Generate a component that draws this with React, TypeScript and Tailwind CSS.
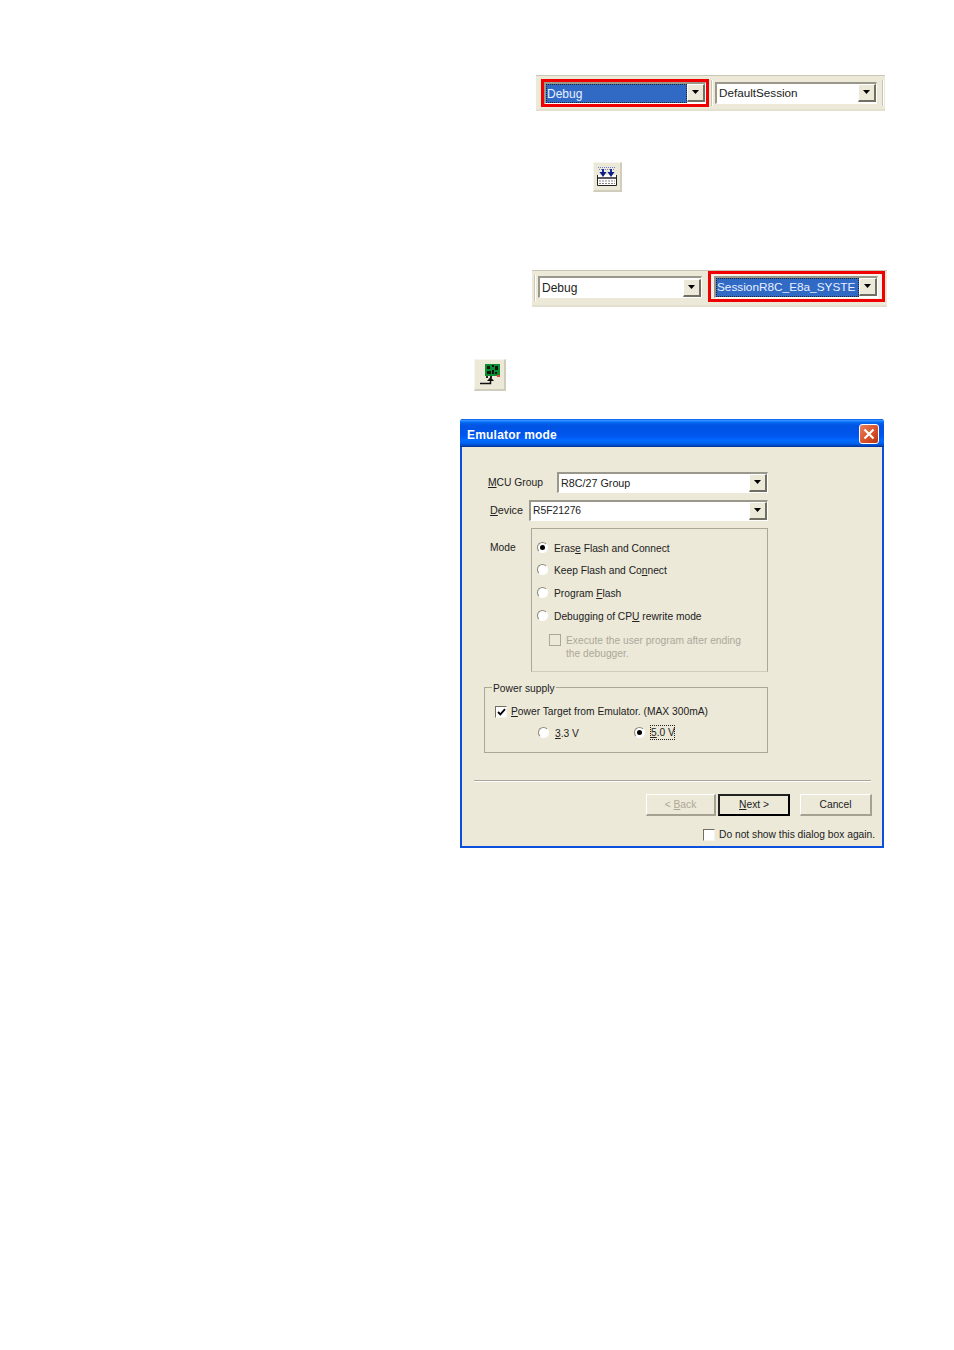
const sans = "font-['Liberation_Sans',Arial,sans-serif]";

function ComboArrow() {
  return (
    <div className="flex h-[18px] w-[18px] shrink-0 items-center justify-center border-r-2 border-b-2 border-l border-t border-r-[#716f64] border-b-[#716f64] border-l-white border-t-white bg-[#ece9d8]">
      <svg width="8" height="5" viewBox="0 0 8 5">
        <path d="M0 0h7L3.5 4z" fill="#000" />
      </svg>
    </div>
  );
}

function Combo({
  text,
  width,
  selected,
  textSize,
  height,
}: {
  text: string;
  width: string;
  selected?: boolean;
  textSize?: string;
  height?: string;
}) {
  return (
    <div
      className={`flex items-center border-t-2 border-l-2 border-r border-b border-t-[#9a988a] border-l-[#9a988a] border-r-white border-b-white bg-white ${height ?? "h-[22px]"} ${width}`}
    >
      <div
        className={`flex h-full min-w-0 flex-1 items-center overflow-hidden whitespace-nowrap ${textSize ?? "text-[12px]"} ${
          selected
            ? "my-[1px] border border-dotted border-[#222] bg-[#316ac5] pt-[1px] text-[#e8f0ff]"
            : "pl-[2px] text-[#222]"
        }`}
      >
        {text}
      </div>
      <ComboArrow />
    </div>
  );
}

function ToolbarButton({ children, size }: { children: React.ReactNode; size: string }) {
  return (
    <div
      className={`flex items-center justify-center border-t border-l border-r-2 border-b-2 border-t-[#f6f5ee] border-l-[#f6f5ee] border-r-[#d0cdbc] border-b-[#d0cdbc] bg-[#ece9d8] ${size}`}
    >
      {children}
    </div>
  );
}

function Radio({ checked }: { checked?: boolean }) {
  return (
    <span className="flex h-[11px] w-[11px] shrink-0 items-center justify-center rounded-full border border-t-[#8a887a] border-l-[#8a887a] border-r-white border-b-white bg-white">
      {checked && <span className="h-[5px] w-[5px] rounded-full bg-black" />}
    </span>
  );
}

function CheckBox({ checked, disabled }: { checked?: boolean; disabled?: boolean }) {
  return (
    <span
      className={`flex h-[12px] w-[12px] shrink-0 items-center justify-center border-t border-l border-r border-b ${
        disabled
          ? "border-[#aaa89a] bg-[#ece9d8]"
          : "border-t-[#716f64] border-l-[#716f64] border-r-[#f5f4ea] border-b-[#f5f4ea] bg-white"
      }`}
    >
      {checked && (
        <svg width="9" height="8" viewBox="0 0 9 8">
          <path d="M1 4l2.4 2.4L8 1.2" fill="none" stroke="#000" strokeWidth="1.8" />
        </svg>
      )}
    </span>
  );
}

function RadioRow({
  checked,
  label,
  className,
}: {
  checked?: boolean;
  label: React.ReactNode;
  className: string;
}) {
  return (
    <div className={`flex h-[13px] items-center gap-[6px] text-[10.25px] leading-[13px] text-[#222] ${className}`}>
      <Radio checked={checked} />
      <span className="pt-[1px]">{label}</span>
    </div>
  );
}

function DialogButton({
  children,
  disabled,
  active,
  width,
}: {
  children: React.ReactNode;
  disabled?: boolean;
  active?: boolean;
  width: string;
}) {
  return (
    <div
      className={`flex h-[22px] items-center justify-center bg-[#ece9d8] text-[10.25px] ${width} ${
        active
          ? "border-2 border-t-[#222] border-l-[#222] border-r-black border-b-black text-[#111]"
          : "border-t border-l border-r-2 border-b-2 border-t-white border-l-white border-r-[#a5a294] border-b-[#a5a294]"
      } ${disabled ? "text-[#aca899]" : "text-[#222]"}`}
    >
      <span>{children}</span>
    </div>
  );
}

function BoardIcon() {
  return (
    <svg width="22" height="24" viewBox="0 0 22 24">
      <rect x="6" y="1" width="15" height="12" fill="#0b8f2e" />
      <rect x="8" y="3" width="3" height="3" fill="#111" />
      <rect x="13" y="2" width="2" height="2" fill="#111" />
      <rect x="16" y="3" width="3" height="4" fill="#111" />
      <rect x="8" y="8" width="4" height="3" fill="#111" />
      <rect x="13" y="7" width="2" height="4" fill="#111" />
      <rect x="16" y="9" width="2" height="2" fill="#111" />
      <rect x="18" y="12" width="3" height="2" fill="#e8403a" />
      <rect x="7" y="13" width="2" height="2" fill="#222" />
      <rect x="11" y="13" width="2" height="2" fill="#222" />
      <path d="M1 20.5h10.500v-3" fill="none" stroke="#111" strokeWidth="1.5" />
      <path d="M8 18l3.500-4 3.500 4z" fill="#111" />
    </svg>
  );
}

function DownloadIcon() {
  return (
    <svg width="22" height="22" viewBox="0 0 22 22">
      <path d="M2 1.500h18M3 3.500h16" stroke="#6f80cc" strokeWidth="1" strokeDasharray="1 1" />
      <path d="M7 3v3M15 3v3" stroke="#1a2f9c" strokeWidth="2" />
      <path d="M1.500 9v10.500h19V9" fill="#fff" stroke="#222" />
      <path d="M3.500 6h7L7 11zM11.500 6h7L15 11z" fill="#0c1f8c" />
      <path d="M2 12h18" stroke="#222" strokeWidth="1.500" />
      <path d="M3 15h16M3 17.500h16" stroke="#888" strokeDasharray="2 1" />
    </svg>
  );
}

function Grip() {
  return <div className="h-[26px] w-[2px] shrink-0 border-l border-r border-l-[#c9c6b6] border-r-white" />;
}

export default function App() {
  return (
    <div className={`flex h-[1350px] w-[954px] flex-col overflow-hidden bg-white ${sans}`}>
      {/* configuration toolbar */}
      <div className="mt-[75px] ml-[536px] flex h-[36px] w-[349px] items-center border-t border-b-2 border-t-[#c9c6b6] border-b-[#e3e0cf] bg-[#ece9d8] pl-[5px]">
        <div className="flex h-[28px] w-[168px] shrink-0 items-center border-[3px] border-[#f00000] bg-[#f4f2e8]">
          <Combo text="Debug" width="w-[162px]" selected />
        </div>
        <div className="ml-[2px]">
          <Grip />
        </div>
        <div className="ml-[2px]">
          <Combo text="DefaultSession" width="w-[162px]" textSize="text-[11.7px]" />
        </div>
        <div className="ml-[5px]">
          <Grip />
        </div>
      </div>

      <div className="mt-[51px] ml-[593px]">
        <ToolbarButton size="h-[30px] w-[29px]">
          <DownloadIcon />
        </ToolbarButton>
      </div>

      {/* session toolbar */}
      <div className="mt-[78px] ml-[532px] flex h-[37px] w-[355px] items-start border-t border-b-2 border-t-[#c9c6b6] border-b-[#e3e0cf] bg-[#ece9d8] pl-[2px]">
        <div className="mt-[4px]">
          <Grip />
        </div>
        <div className="mt-[5px] ml-[2px]">
          <Combo text="Debug" width="w-[164px]" />
        </div>
        <div className="ml-[6px] flex h-[31px] w-[177px] items-center border-[3px] border-[#f00000] bg-[#f4f2e8] pl-[3px]">
          <Combo text="SessionR8C_E8a_SYSTE" width="w-[164px]" textSize="text-[11.800px]" selected />
        </div>
      </div>

      <div className="mt-[52px] ml-[474px]">
        <ToolbarButton size="h-[32px] w-[32px]">
          <BoardIcon />
        </ToolbarButton>
      </div>

      {/* Emulator mode dialog */}
      <div className="mt-[28px] ml-[460px] flex h-[429px] w-[424px] flex-col rounded-t-[3px] bg-[#0a50dc]">
        <div className="flex h-[28px] shrink-0 items-center justify-between rounded-t-[3px] bg-[linear-gradient(180deg,#0058ee_0%,#3593ff_5%,#127dff_9%,#0262ee_14%,#0054e3_24%,#0055eb_56%,#005bf5_66%,#026afe_76%,#0062ef_86%,#0052d6_92%,#003092_100%)] pt-[1px] pr-[5px] pl-[7px]">
          <span className="mt-[2px] text-[12px] font-bold tracking-[0.2px] text-white">Emulator mode</span>
          <div className="flex h-[20px] w-[20px] items-center justify-center rounded-[3px] border border-white bg-[linear-gradient(135deg,#e8815f,#d8512a_55%,#b93412)]">
            <svg width="12" height="12" viewBox="0 0 12 12">
              <path d="M1.500 1.500l9 9M10.500 1.500l-9 9" stroke="#fff" strokeWidth="2.200" />
            </svg>
          </div>
        </div>

        <div className="mx-[2px] mb-[2px] flex flex-1 flex-col bg-[#ece9d8] text-[#222]">
          <div className="mt-[25px] flex items-center pl-[26px] text-[10.300px]">
            <span className="w-[69px]">
              <u>M</u>CU Group
            </span>
            <Combo text="R8C/27 Group" width="w-[211px]" height="h-[21px]" textSize="text-[10.750px]" />
          </div>
          <div className="mt-[7px] flex items-center pl-[28px] text-[10.800px]">
            <span className="w-[39px]">
              <u>D</u>evice
            </span>
            <Combo text="R5F21276" width="w-[239px]" height="h-[21px]" textSize="text-[10.300px]" />
          </div>

          <div className="mt-[7px] flex pl-[28px]">
            <span className="mt-[13px] w-[41px] text-[10.250px] leading-[13px]">Mode</span>
            <div className="h-[144px] w-[237px] border border-t-[#aca899] border-l-[#aca899] border-r-[#aca899] border-b-[#d0cdbc] pt-[12px] pl-[5px]">
              <RadioRow
                checked
                label={
                  <>
                    Eras<u>e</u> Flash and Connect
                  </>
                }
                className=""
              />
              <RadioRow
                label={
                  <>
                    Keep Flash and Co<u>n</u>nect
                  </>
                }
                className="mt-[9px]"
              />
              <RadioRow
                label={
                  <>
                    Program <u>F</u>lash
                  </>
                }
                className="mt-[10px]"
              />
              <RadioRow
                label={
                  <>
                    Debugging of CP<u>U</u> rewrite mode
                  </>
                }
                className="mt-[10px]"
              />
              <div className="mt-[12px] ml-[12px] flex gap-[5px] text-[10.250px] leading-[13px] text-[#aca899]">
                <CheckBox disabled />
                <span className="w-[190px]">Execute the user program after ending the debugger.</span>
              </div>
            </div>
          </div>

          <div className="relative mt-[15px] ml-[22px] h-[66px] w-[284px] border border-[#aca899] pt-[17px] pl-[10px]">
            <span className="absolute -top-[6px] left-[7px] bg-[#ece9d8] px-[1px] text-[10.250px] leading-[13px]">
              Power supply
            </span>
            <div className="flex items-center gap-[4px] text-[10.250px] leading-[13px]">
              <CheckBox checked />
              <span>
                <u>P</u>ower Target from Emulator. (MAX 300mA)
              </span>
            </div>
            <div className="mt-[7px] flex items-center pl-[43px]">
              <RadioRow
                label={
                  <>
                    <u>3</u>.3 V
                  </>
                }
                className="w-[96px]"
              />
              <div className="flex items-center gap-[5px] text-[10.250px] leading-[13px]">
                <Radio checked />
                <span className="w-[25px] border border-dotted border-[#222] whitespace-nowrap">
                  <u>5</u>.0 V
                </span>
              </div>
            </div>
          </div>

          <div className="mt-[27px] ml-[12px] h-[2px] w-[397px] border-t border-b border-t-[#aca899] border-b-white" />

          <div className="mt-[12px] flex pl-[184px]">
            <DialogButton width="w-[70px]" disabled>
              &lt; <u>B</u>ack
            </DialogButton>
            <div className="ml-[2px]">
              <DialogButton width="w-[72px]" active>
                <u>N</u>ext &gt;
              </DialogButton>
            </div>
            <div className="ml-[10px]">
              <DialogButton width="w-[72px]">Cancel</DialogButton>
            </div>
          </div>

          <div className="mt-[12px] flex items-center gap-[4px] pl-[241px] text-[10.250px] leading-[13px] whitespace-nowrap">
            <CheckBox />
            <span>Do not show this dialog box again.</span>
          </div>
        </div>
      </div>
    </div>
  );
}
